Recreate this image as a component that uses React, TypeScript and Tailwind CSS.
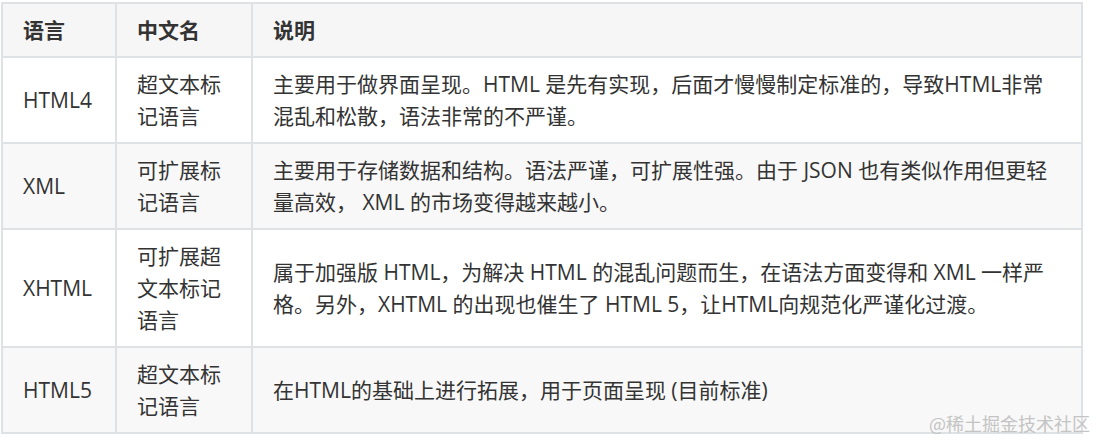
import React from "react";

type Row = {
  lang: string;
  name: React.ReactNode;
  desc: React.ReactNode;
  gray?: boolean;
};

const rows: Row[] = [
  {
    lang: "HTML4",
    name: "超文本标记语言",
    desc: (
      <>
        主要用于做界面呈现。HTML 是先有实现，后面才慢慢制定标准的，导致HTML非常
        <br />
        混乱和松散，语法非常的不严谨。
      </>
    ),
  },
  {
    lang: "XML",
    name: "可扩展标记语言",
    desc: (
      <>
        主要用于存储数据和结构。语法严谨，可扩展性强。由于 JSON 也有类似作用但更轻
        <br />
        量高效， XML 的市场变得越来越小。
      </>
    ),
    gray: true,
  },
  {
    lang: "XHTML",
    name: "可扩展超文本标记语言",
    desc: (
      <>
        属于加强版 HTML，为解决 HTML 的混乱问题而生，在语法方面变得和 XML 一样严
        <br />
        格。另外，XHTML 的出现也催生了 HTML 5，让HTML向规范化严谨化过渡。
      </>
    ),
  },
  {
    lang: "HTML5",
    name: "超文本标记语言",
    desc: <>在HTML的基础上进行拓展，用于页面呈现 (目前标准)</>,
    gray: true,
  },
];

const cell = "border-2 border-[#dfe2e5] px-[20px] py-[10px] align-middle";

export default function App() {
  return (
    <div
      className="relative w-[1096px] h-[441px] overflow-hidden bg-white text-[#333333]"
      style={{ fontFamily: '"Open Sans", "Noto Sans CJK SC", sans-serif' }}
    >
      <table className="ml-[1px] mt-[2px] w-[1082px] border-collapse table-fixed text-[21px] leading-[32px]">
        <colgroup>
          <col className="w-[114px]" />
          <col className="w-[136px]" />
          <col />
        </colgroup>
        <thead>
          <tr className="bg-[#f6f6f6] text-left font-bold">
            <th className={cell}>语言</th>
            <th className={cell}>中文名</th>
            <th className={cell}>说明</th>
          </tr>
        </thead>
        <tbody>
          {rows.map((r) => (
            <tr key={r.lang} className={r.gray ? "bg-[#f8f8f8]" : "bg-white"}>
              <td className={cell}>{r.lang}</td>
              <td className={cell}>{r.name}</td>
              <td className={cell}>{r.desc}</td>
            </tr>
          ))}
        </tbody>
      </table>
      <div
        className="absolute right-[6px] top-[411px] text-[18px] leading-[24px] text-[#c4c4c4]"
        style={{ fontFamily: '"Noto Sans CJK SC", sans-serif' }}
      >
        @稀土掘金技术社区
      </div>
    </div>
  );
}
